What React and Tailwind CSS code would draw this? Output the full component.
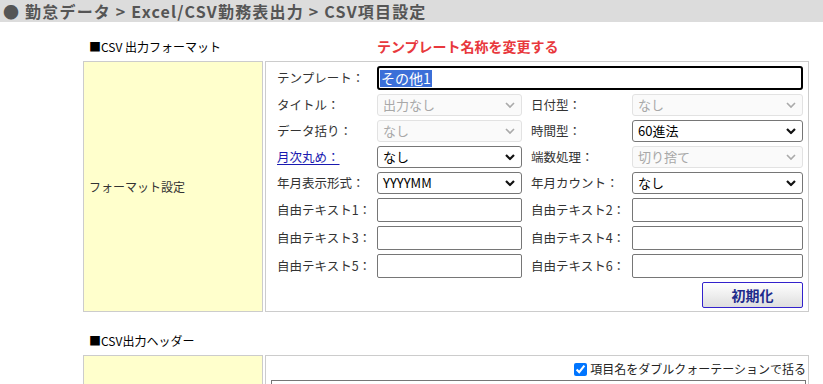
import React from "react";

const Chevron = ({ disabled }) => (
  <svg width="10" height="7" viewBox="0 0 10 7" className="absolute right-[6px] top-1/2 -translate-y-1/2">
    <path d="M1 1.5 L5 5.5 L9 1.5" fill="none" stroke={disabled ? "#aaaaaa" : "#111111"} strokeWidth={disabled ? 1.6 : 2.2} />
  </svg>
);

function FakeSelect({ value, disabled }) {
  return (
    <div
      className={
        "relative h-[22px] rounded-[3px] border pl-[5px] text-[13px] leading-[20px] " +
        (disabled ? "border-[#e2e2e2] bg-[#fafafa] text-[#a8a8a8]" : "border-[#767676] bg-white text-black")
      }
    >
      {value}
      <Chevron disabled={disabled} />
    </div>
  );
}

function TextBox() {
  return <div className="h-[24px] rounded-[2px] border border-[#767676] bg-white" />;
}

function Label({ children, pad, link }) {
  return (
    <div className={"flex items-center text-[12.5px] " + (pad ? "pl-[9px] " : "") + (link ? "text-[#1a1ab0] " : "text-[#333]")}>
      <span className={link ? "underline underline-offset-2" : ""}>{children}</span>
    </div>
  );
}

export default function App() {
  return (
    <div className="min-h-screen bg-white font-['Noto_Sans_CJK_JP','Noto_Sans',sans-serif] text-[#333]">
      <div className="h-[22px] overflow-hidden whitespace-nowrap bg-[#dcdcdc] pl-[3px] text-[16px] font-bold leading-[22px] tracking-[1.2px] text-[#555]">
        ● 勤怠データ &gt; Excel/CSV勤務表出力 &gt; CSV項目設定
      </div>

      <div className="pl-[83px]">
        <div className="mt-[16px] mb-[5px] flex h-[18px] items-end">
          <div className="w-[294px] pl-[6px] text-[12px] leading-[18px] text-black">■CSV 出力フォーマット</div>
          <div className="text-[14px] font-bold leading-[20px] text-[#e8383d]">テンプレート名称を変更する</div>
        </div>

        <div className="flex gap-[2px]">
          <div className="flex w-[180px] items-center border border-[#cccccc] bg-[#ffffcc] pl-[5px] text-[12px] text-[#333]">
            フォーマット設定
          </div>
          <div className="w-[544px] border border-[#cccccc] pt-[4px] pr-[5px] pb-[3px] pl-[11px]">
            <div className="grid grid-cols-[100px_145px_110px_171px] gap-y-[4px]">
              <Label>テンプレート：</Label>
              <div className="col-span-3 flex h-[24px] items-center rounded-[3px] border-2 border-black pl-[1px]">
                <span className="bg-[#3b6fd8] px-[1px] text-[14px] leading-[17px] text-white">その他1</span>
              </div>

              <Label>タイトル：</Label>
              <FakeSelect value="出力なし" disabled />
              <Label pad>日付型：</Label>
              <FakeSelect value="なし" disabled />

              <Label>データ括り：</Label>
              <FakeSelect value="なし" disabled />
              <Label pad>時間型：</Label>
              <FakeSelect value="60進法" />

              <Label link>月次丸め：</Label>
              <FakeSelect value="なし" />
              <Label pad>端数処理：</Label>
              <FakeSelect value="切り捨て" disabled />

              <Label>年月表示形式：</Label>
              <FakeSelect value="YYYYMM" />
              <Label pad>年月カウント：</Label>
              <FakeSelect value="なし" />

              <Label>自由テキスト1：</Label>
              <TextBox />
              <Label pad>自由テキスト2：</Label>
              <TextBox />

              <Label>自由テキスト3：</Label>
              <TextBox />
              <Label pad>自由テキスト4：</Label>
              <TextBox />

              <Label>自由テキスト5：</Label>
              <TextBox />
              <Label pad>自由テキスト6：</Label>
              <TextBox />

              <div className="col-span-4 flex justify-end">
                <button className="h-[26px] w-[101px] rounded-[2px] border border-[#3322cc] bg-gradient-to-b from-white to-[#dedede] text-[14px] font-bold text-[#1f2c8c]">
                  初期化
                </button>
              </div>
            </div>
          </div>
        </div>

        <div className="mt-[20px] mb-[5px] h-[18px] pl-[6px] text-[12px] leading-[18px] text-black">■CSV出力ヘッダー</div>

        <div className="flex h-[100px] gap-[2px]">
          <div className="w-[180px] border border-[#cccccc] bg-[#ffffcc]" />
          <div className="w-[544px] border border-[#cccccc] pt-[4px] pr-[2px] pl-[5px]">
            <div className="flex h-[18px] items-center justify-end gap-[3px] text-[12px] text-[#222]">
              <input type="checkbox" defaultChecked className="m-0 h-[13px] w-[13px] accent-[#0075ff]" />
              <span>項目名をダブルクォーテーションで括る</span>
            </div>
            <div className="mt-[2px] h-[60px] border border-[#767676]" />
          </div>
        </div>
      </div>
    </div>
  );
}
